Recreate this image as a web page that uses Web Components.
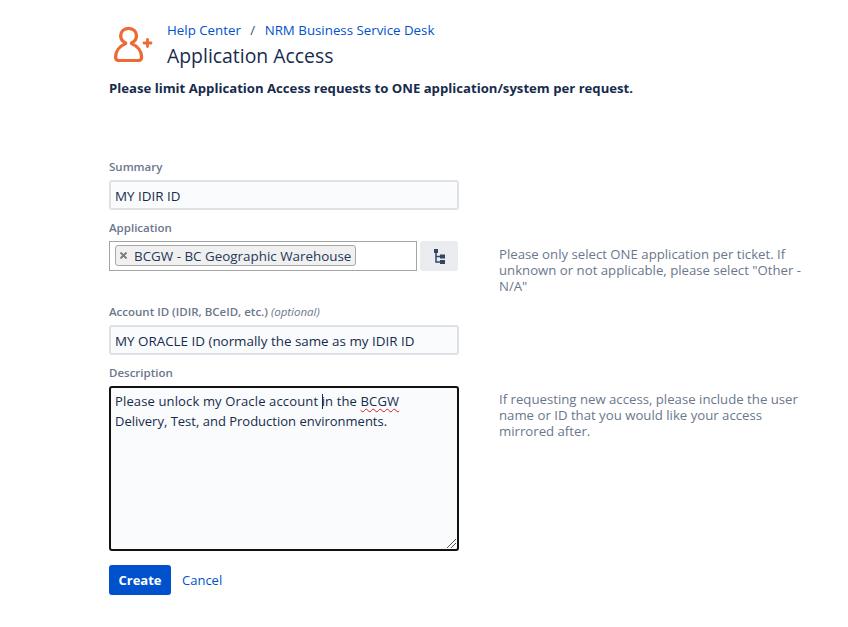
<!DOCTYPE html>
<html>
<head>
<meta charset="utf-8">
<title>Application Access</title>
<style>
    html, body { margin: 0; background: #fff; }
    body { font-family: "Open Sans", "Noto Sans", sans-serif; color: #172b4d; }
</style>
</head>
<body>
<request-page>
    <request-header slot="header" crumb-a="Help Center" crumb-b="NRM Business Service Desk" title="Application Access"></request-header>
    <span slot="notice">Please limit Application Access requests to ONE application/system per request.</span>

    <form-field label="Summary" style="height:61px">
        <text-box>MY IDIR ID</text-box>
    </form-field>

    <form-field label="Application" style="height:84px">
        <picker-box>BCGW - BC Geographic Warehouse</picker-box>
        <span slot="help">Please only select ONE application per ticket. If unknown or not applicable, please select "Other - N/A"</span>
    </form-field>

    <form-field label="Account ID (IDIR, BCeID, etc.)" optional style="height:61px">
        <text-box>MY ORACLE ID (normally the same as my IDIR ID</text-box>
    </form-field>

    <form-field label="Description" style="height:200px">
        <note-area></note-area>
        <span slot="help">If requesting new access, please include the user name or ID that you would like your access mirrored after.</span>
    </form-field>

    <form-actions></form-actions>
</request-page>

<script>
class RequestPage extends HTMLElement {
    constructor() {
        super();
        this.attachShadow({ mode: "open" });
        this.shadowRoot.innerHTML = `
        <style>
            :host { display: block; width: 848px; height: 627px; padding-left: 109px; box-sizing: border-box; overflow: hidden; }
            .notice { font-size: 13.15px; font-weight: 700; line-height: 18px; margin: 0 0 62px; height: 18px; white-space: nowrap; color: #172b4d; }
        </style>
        <slot name="header"></slot>
        <p class="notice"><slot name="notice"></slot></p>
        <slot></slot>`;
    }
}

class RequestHeader extends HTMLElement {
    constructor() {
        super();
        this.attachShadow({ mode: "open" });
    }
    connectedCallback() {
        this.shadowRoot.innerHTML = `
        <style>
            :host { display: flex; height: 79px; padding: 21px 0 0 3px; box-sizing: border-box; gap: 14px; }
            svg { width: 41px; height: 41px; margin-top: 3px; flex: none; }
            nav { font-size: 13.3px; line-height: 18px; color: #0052cc; white-space: nowrap; }
            nav i { font-style: normal; color: #42526e; padding: 0 6px; }
            h1 { margin: 3px 0 0; font-size: 19.4px; line-height: 28px; font-weight: 500; color: #172b4d; }
        </style>
        <svg viewBox="0 0 41 41" fill="none" stroke="#ed6a34" stroke-width="3.2" stroke-linecap="round" stroke-linejoin="round">
            <path transform="translate(1.5 1.5) scale(1.04 .96)" d="M14.5 3c-4.6 0-7.6 3.4-7.6 7.6 0 3.4 1.600 5.800 4.300 7.200.6.400.6 1.100 0 1.400C5.600 21.600 2 27 2 33c0 2 1 3.400 3 3.400h19c2 0 3-1.400 3-3.400 0-6-3.600-11.400-9.200-13.800-.6-.3-.6-1-.000-1.400 2.700-1.400 4.300-3.800 4.300-7.200C22.100 6.400 19.100 3 14.500 3z"/>
            <path stroke-width="2.800" d="M35.500 15.500v7M32 19h7"/>
        </svg>
        <div>
            <nav>${this.getAttribute("crumb-a")}<i> / </i>${this.getAttribute("crumb-b")}</nav>
            <h1>${this.getAttribute("title")}</h1>
        </div>`;
    }
}

class FormField extends HTMLElement {
    constructor() {
        super();
        this.attachShadow({ mode: "open" });
    }
    connectedCallback() {
        const extra = this.hasAttribute("optional") ? ` <em>(optional)</em>` : "";
        this.shadowRoot.innerHTML = `
        <style>
            :host { display: grid; grid-template-columns: 350px 310px; column-gap: 40px; align-content: start; }
            label { grid-column: 1 / 3; font-size: 11.5px; font-weight: 600; line-height: 16px; color: #6b778c; margin-bottom: 5px; }
            em { font-weight: 400; }
            .help { font-size: 13.2px; line-height: 16px; color: #6b778c; padding-top: 5px; }
        </style>
        <label>${this.getAttribute("label")}${extra}</label>
        <div><slot></slot></div>
        <div class="help"><slot name="help"></slot></div>`;
    }
}

class TextBox extends HTMLElement {
    constructor() {
        super();
        this.attachShadow({ mode: "open" });
        this.shadowRoot.innerHTML = `
        <style>
            :host { display: block; height: 30px; box-sizing: border-box; border: 2px solid #dfe1e6; border-radius: 3px; background: #fafbfc; padding: 0 4px; font-size: 13.4px; line-height: 28px; color: #172b4d; white-space: nowrap; overflow: hidden; }
        </style>
        <slot></slot>`;
    }
}

class PickerBox extends HTMLElement {
    constructor() {
        super();
        this.attachShadow({ mode: "open" });
        this.shadowRoot.innerHTML = `
        <style>
            :host { display: flex; height: 30px; gap: 3px; }
            .box { display: flex; align-items: flex-start; width: 308px; box-sizing: border-box; border: 1px solid #a5a5a5; background: #fff; padding: 3px 5px; }
            .tag { display: inline-flex; align-items: center; height: 21px; box-sizing: border-box; border: 1px solid #a8a8a8; border-radius: 3px; background: #f0f0f0; padding: 0 4px; font-size: 13.4px; color: #253858; white-space: nowrap; }
            .tag svg { width: 7px; height: 7px; margin-right: 7px; }
            button { width: 38px; border: 0; border-radius: 3px; background: #ebecf0; padding: 0; display: flex; align-items: center; justify-content: center; }
            button svg { width: 11px; height: 15px; }
        </style>
        <div class="box">
            <span class="tag">
                <svg viewBox="0 0 7 7" stroke="#808080" stroke-width="2"><path d="M.5.5l6 6M6.500.5l-6 6"/></svg>
                <slot></slot>
            </span>
        </div>
        <button type="button" aria-label="Browse">
            <svg viewBox="0 0 11 15">
                <path d="M2 3v10h5M2 7.500h5" fill="none" stroke="#344563" stroke-width="1.500"/>
                <rect x="0" y="0" width="4" height="4" fill="#344563"/>
                <rect x="6" y="5.500" width="5" height="4" fill="#344563"/>
                <rect x="6" y="11" width="5" height="4" fill="#344563"/>
            </svg>
        </button>`;
    }
}

class NoteArea extends HTMLElement {
    constructor() {
        super();
        this.attachShadow({ mode: "open" });
        this.shadowRoot.innerHTML = `
        <style>
            :host { display: block; position: relative; height: 165px; box-sizing: border-box; border: 2px solid #111; border-radius: 3px; background: #fafbfc; padding: 3px 4px; font-size: 13px; line-height: 20px; color: #172b4d; }
            .first { letter-spacing: .14px; }
            .spell { text-decoration: underline wavy #d8202a 1px; text-underline-offset: 2px; }
            .caret { display: inline-block; width: 1px; height: 15px; background: #172b4d; vertical-align: -3px; margin-right: -1px; }
            .grip { position: absolute; right: 1px; bottom: 1px; width: 9px; height: 9px; }
        </style>
        <div><span class="first">Please unlock my Oracle account <span class="caret"></span>in the <span class="spell">BCGW</span></span><br>Delivery, Test, and Production environments.</div>
        <svg class="grip" viewBox="0 0 9 9" stroke="#555" stroke-width="1"><path d="M0 9l9-9M4 9l5-5"/></svg>`;
    }
}

class FormActions extends HTMLElement {
    constructor() {
        super();
        this.attachShadow({ mode: "open" });
        this.shadowRoot.innerHTML = `
        <style>
            :host { display: flex; align-items: center; gap: 11px; height: 30px; font-size: 13px; }
            button { width: 62px; height: 30px; border: 0; border-radius: 3px; background: #0052cc; color: #fff; font: 700 13px "Open Sans", sans-serif; padding: 0; }
            a { color: #0052cc; text-decoration: none; }
        </style>
        <button type="button">Create</button>
        <a href="#">Cancel</a>`;
    }
}

customElements.define("request-page", RequestPage);
customElements.define("request-header", RequestHeader);
customElements.define("form-field", FormField);
customElements.define("text-box", TextBox);
customElements.define("picker-box", PickerBox);
customElements.define("note-area", NoteArea);
customElements.define("form-actions", FormActions);
</script>
</body>
</html>
